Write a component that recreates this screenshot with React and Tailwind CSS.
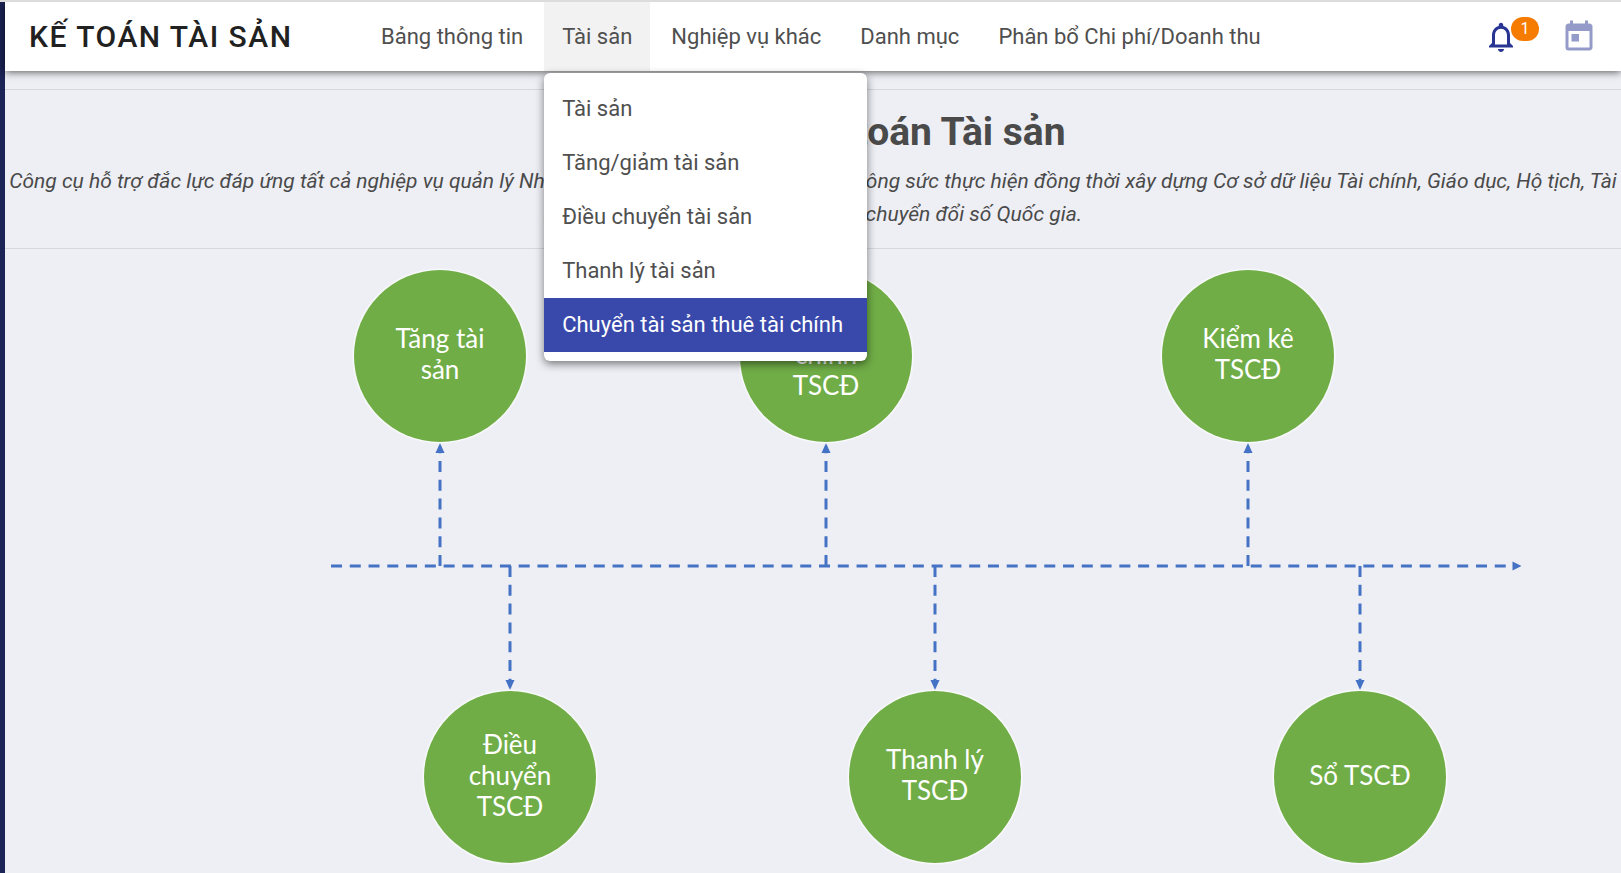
import { MdNotificationsNone, MdToday } from "react-icons/md";

const nav = [
  { label: "Bảng thông tin" },
  {
    label: "Tài sản",
    open: true,
    items: [
      "Tài sản",
      "Tăng/giảm tài sản",
      "Điều chuyển tài sản",
      "Thanh lý tài sản",
      "Chuyển tài sản thuê tài chính",
    ],
  },
  { label: "Nghiệp vụ khác" },
  { label: "Danh mục" },
  { label: "Phân bổ Chi phí/Doanh thu" },
];

const AXIS = 317;
const nodes = [
  { x: 347, y: 107, lines: ["Tăng tài", "sản"] },
  { x: 733, y: 107, lines: ["Điều", "chỉnh", "TSCĐ"] },
  { x: 1155, y: 107, lines: ["Kiểm kê", "TSCĐ"] },
  { x: 417, y: 528, lines: ["Điều", "chuyển", "TSCĐ"] },
  { x: 842, y: 528, lines: ["Thanh lý", "TSCĐ"] },
  { x: 1267, y: 528, lines: ["Sổ TSCĐ"] },
];

function Menu({ items }) {
  return (
    <ul className="absolute left-0 top-full z-20 mt-0.5 min-w-[323px] rounded-md bg-white py-[9px] shadow-[0_3px_8px_rgba(0,0,0,0.5)]">
      {items.map((item, i) => (
        <li key={item}>
          <a
            href="#"
            className={
              i === items.length - 1
                ? "flex h-[54px] items-center whitespace-nowrap bg-[#3949ab] px-[18px] pb-0.5 text-white"
                : "flex h-[54px] items-center whitespace-nowrap px-[18px] pb-0.5"
            }
          >
            {item}
          </a>
        </li>
      ))}
    </ul>
  );
}

function Header() {
  return (
    <header className="relative z-10 flex h-[69px] items-center bg-white pl-6 pr-6 shadow-[0_1px_8px_rgba(0,0,0,0.65)]">
      <div className="w-[334px] text-[30px] font-medium tracking-wider text-[#212121]">KẾ TOÁN TÀI SẢN</div>
      <nav className="flex h-full gap-[3px] text-[22px] text-[#4f4f4f]">
        {nav.map((entry) => (
          <div key={entry.label} className="relative h-full">
            <button
              type="button"
              className={
                entry.open
                  ? "h-full whitespace-nowrap bg-[#f2f2f2] px-[18px]"
                  : "h-full whitespace-nowrap px-[18px]"
              }
            >
              {entry.label}
            </button>
            {entry.items && <Menu items={entry.items} />}
          </div>
        ))}
      </nav>
      <div className="ml-auto flex items-center gap-[42px]">
        <button type="button" aria-label="Thông báo" className="relative text-[#283593]">
          <MdNotificationsNone size={36} />
          <span className="absolute -top-0.5 left-7 flex h-6 w-7 items-center justify-center rounded-full bg-[#f57c00] text-base text-white">
            1
          </span>
        </button>
        <button type="button" aria-label="Lịch" className="text-[#949bc9]">
          <MdToday size={36} />
        </button>
      </div>
    </header>
  );
}

function Arrow({ x, y }) {
  const up = y < AXIS;
  const tip = up ? y + 87 : y - 87;
  const base = up ? tip + 10 : tip - 10;
  const end = up ? tip + 5 : tip - 5;
  return (
    <g>
      <line x1={x} y1={AXIS} x2={x} y2={end} stroke="#4472c4" strokeWidth="3" strokeDasharray="11 7.8" />
      <path d={`M${x} ${tip}L${x - 4.5} ${base}H${x + 4.5}Z`} fill="#4472c4" />
    </g>
  );
}

function Diagram() {
  return (
    <div className="relative mx-auto h-[622px] w-[1440px]">
      <svg className="absolute inset-0" width="1440" height="622" viewBox="0 0 1440 622" aria-hidden="true">
        <line x1="238" y1={AXIS} x2="1423" y2={AXIS} stroke="#4472c4" strokeWidth="3" strokeDasharray="11 7.77" />
        <path d={`M1428.5 ${AXIS}l-9 -4.5v9Z`} fill="#4472c4" />
        {nodes.map((n) => (
          <Arrow key={n.x} x={n.x} y={n.y} />
        ))}
      </svg>
      {nodes.map((n) => (
        <a
          key={n.x}
          href="#"
          style={{ left: n.x, top: n.y }}
          className="absolute flex size-[172px] -translate-x-1/2 -translate-y-1/2 flex-col items-center justify-center rounded-full bg-[#70ad47] pb-1 font-[Lato,sans-serif] text-[26px] leading-[31px] text-white shadow-[0_0_2px_1px_#ffffff]"
        >
          {n.lines.map((line) => (
            <span key={line}>{line}</span>
          ))}
        </a>
      ))}
    </div>
  );
}

export default function App() {
  return (
    <div className="min-h-screen overflow-hidden border-t-2 border-[#dcdcdc] bg-[#eeeff5] font-[Roboto,sans-serif] text-[#4a4a4a]">
      <div className="min-h-[871px] border-l-[5px] border-[#1c2355]">
        <Header />
        <main className="pt-[18px]">
          <section className="border-y border-[#d6d7dc] pb-[17px] pt-[17px] text-center">
            <h1 className="text-[39px] font-bold leading-[50px]">Chương trình Kế toán Tài sản</h1>
            <p className="mt-2 text-[21px] italic leading-[33px]">
              Công cụ hỗ trợ đắc lực đáp ứng tất cả nghiệp vụ quản lý Nhà nước về tài sản giúp giảm tối đa công sức thực hiện đồng thời xây dựng Cơ sở dữ liệu Tài chính, Giáo dục, Hộ tịch, Tài sản công, Thuế, phục vụ công cuộc chuyển đổi số Quốc gia.
            </p>
          </section>
          <Diagram />
        </main>
      </div>
    </div>
  );
}
